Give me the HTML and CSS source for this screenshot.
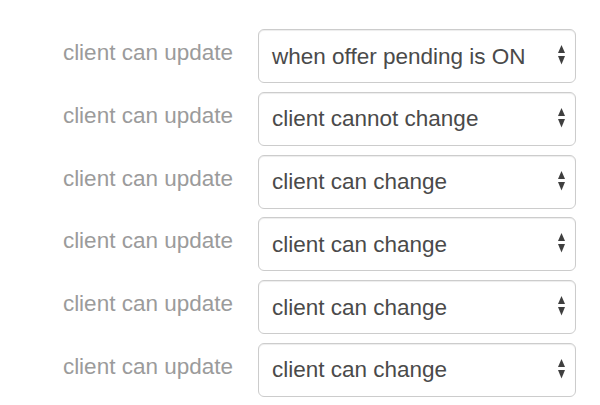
FILE: index.html
```html
<!DOCTYPE html>
<html lang="en">
<head>
<meta charset="utf-8">
<title>Client update settings</title>
<link rel="stylesheet" href="styles.css">
</head>
<body>
<form class="form">
  <div class="row">
    <label class="label">client can update</label>
    <div class="control"><span class="value">when offer pending is ON</span><svg class="caret" width="7" height="20" viewBox="0 0 7 20"><polygon points="0,8 3.5,0 7,8"/><polygon points="0,11 7,11 3.5,19.5"/></svg></div>
  </div>
  <div class="row">
    <label class="label">client can update</label>
    <div class="control"><span class="value">client cannot change</span><svg class="caret" width="7" height="20" viewBox="0 0 7 20"><polygon points="0,8 3.5,0 7,8"/><polygon points="0,11 7,11 3.5,19.5"/></svg></div>
  </div>
  <div class="row">
    <label class="label">client can update</label>
    <div class="control"><span class="value">client can change</span><svg class="caret" width="7" height="20" viewBox="0 0 7 20"><polygon points="0,8 3.5,0 7,8"/><polygon points="0,11 7,11 3.5,19.5"/></svg></div>
  </div>
  <div class="row">
    <label class="label">client can update</label>
    <div class="control"><span class="value">client can change</span><svg class="caret" width="7" height="20" viewBox="0 0 7 20"><polygon points="0,8 3.5,0 7,8"/><polygon points="0,11 7,11 3.5,19.5"/></svg></div>
  </div>
  <div class="row">
    <label class="label">client can update</label>
    <div class="control"><span class="value">client can change</span><svg class="caret" width="7" height="20" viewBox="0 0 7 20"><polygon points="0,8 3.5,0 7,8"/><polygon points="0,11 7,11 3.5,19.5"/></svg></div>
  </div>
  <div class="row">
    <label class="label">client can update</label>
    <div class="control"><span class="value">client can change</span><svg class="caret" width="7" height="20" viewBox="0 0 7 20"><polygon points="0,8 3.5,0 7,8"/><polygon points="0,11 7,11 3.5,19.5"/></svg></div>
  </div>
</form>
</body>
</html>
```
FILE: styles.css
```css
html, body {
  margin: 0;
  padding: 0;
  background: #ffffff;
}
body {
  font-family: "Liberation Sans", Arial, Helvetica, sans-serif;
  font-size: 22.5px;
  line-height: 32px;
}
.form {
  display: flex;
  flex-direction: column;
  gap: 8.8px;
  padding-top: 29px;
}
.row {
  display: flex;
  align-items: flex-start;
  gap: 25px;
}
.label {
  width: 233px;
  text-align: right;
  padding-top: 8px;
  color: #9b9b9b;
  white-space: nowrap;
}
.control {
  box-sizing: border-box;
  width: 318px;
  height: 54px;
  display: flex;
  align-items: center;
  padding: 0 10px 2px 13px;
  border: 1px solid #cccccc;
  border-radius: 6px;
  box-shadow: inset 0 1px 1px rgba(0, 0, 0, 0.075);
  color: #4a4a4a;
  background: #ffffff;
}
.value {
  flex: 1;
  white-space: nowrap;
  padding-top: 3px;
}
.caret {
  flex: none;
  fill: #3f3f3f;
}
```
